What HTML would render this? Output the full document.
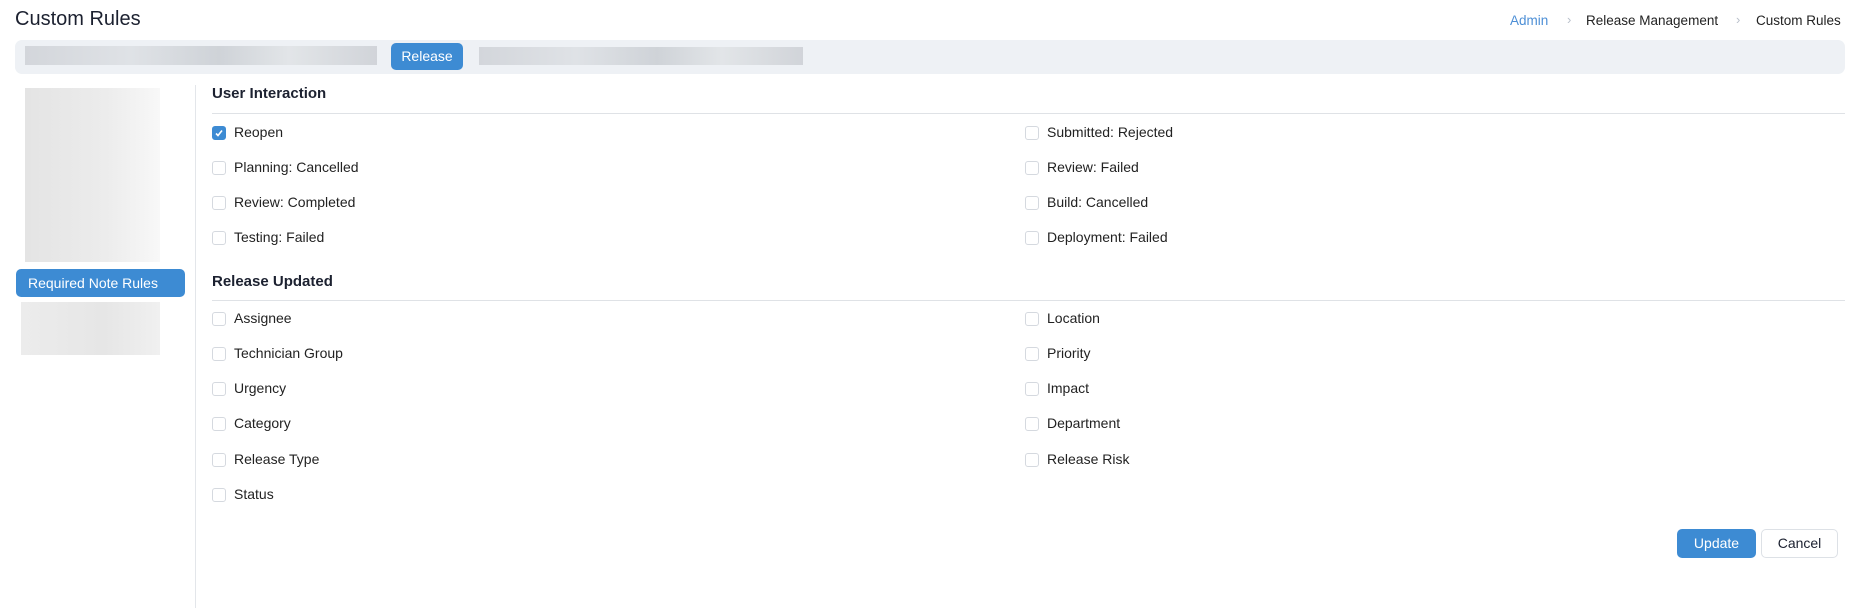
<!DOCTYPE html>
<html><head><meta charset="utf-8"><style>
*{box-sizing:border-box;margin:0;padding:0}
body{width:1853px;height:608px;background:#fff;font-family:"Liberation Sans",sans-serif;color:#1c2130;position:relative;overflow:hidden}
.a{position:absolute}
.title{left:15px;top:8px;font-size:20px;color:#1c2130}
.bc{top:13px;font-size:13.5px;color:#222}
.sep{top:12px;font-size:13px;color:#b8bfca}
.bar{left:15px;top:40px;width:1830px;height:34px;background:#eef1f5;border-radius:7px}
.blur{background:linear-gradient(90deg,#d3d6db,#dfe2e6 30%,#cfd3d8 55%,#e2e5e8 75%,#d1d4d9);}
.btn{background:#3d8bd3;color:#fff;border-radius:5px;font-size:14px;text-align:center}
.h{left:212px;font-size:15px;font-weight:bold;color:#1c2130}
.line{left:212px;width:1633px;height:1px;background:#dfe2e6}
.cb{width:14px;height:14px;border:1px solid #d5d9df;border-radius:3px;background:#fff}
.lb{font-size:14px;color:#222}
</style></head><body>
<div class="a title">Custom Rules</div>
<div class="a bc" style="left:1510px;color:#4d8fd6">Admin</div>
<div class="a sep" style="left:1567px">›</div>
<div class="a bc" style="left:1586px">Release Management</div>
<div class="a sep" style="left:1736px">›</div>
<div class="a bc" style="left:1756px">Custom Rules</div>
<div class="a bar"></div>
<div class="a blur" style="left:25px;top:46px;width:352px;height:19px"></div>
<div class="a btn" style="left:391px;top:43px;width:72px;height:27px;line-height:27px">Release</div>
<div class="a blur" style="left:479px;top:47px;width:324px;height:18px"></div>
<div class="a" style="left:25px;top:88px;width:135px;height:174px;background:linear-gradient(90deg,#e4e4e4,#ececec 60%,#f8f8f8)"></div>
<div class="a btn" style="left:16px;top:269px;width:169px;height:28px;line-height:28px;text-align:left;padding-left:12px;font-size:14px">Required Note Rules</div>
<div class="a" style="left:21px;top:302px;width:139px;height:53px;background:linear-gradient(90deg,#ececec,#e6e6e6 60%,#f0f0f0)"></div>
<div class="a" style="left:195px;top:85px;width:1px;height:523px;background:#e3e6ea"></div>
<div class="a h" style="top:85px">User Interaction</div>
<div class="a line" style="top:113px"></div>
<div class="a h" style="top:273px">Release Updated</div>
<div class="a line" style="top:300px"></div>
<div id="c"></div>
<div class="a btn" style="left:1677px;top:529px;width:79px;height:29px;line-height:29px">Update</div>
<div class="a" style="left:1761px;top:529px;width:77px;height:29px;line-height:27px;border:1px solid #dde1e6;border-radius:5px;text-align:center;font-size:14px">Cancel</div>
<script>
var rows=[[133,"Reopen","Submitted: Rejected",1],[168,"Planning: Cancelled","Review: Failed"],[203,"Review: Completed","Build: Cancelled"],[238,"Testing: Failed","Deployment: Failed"],
[319,"Assignee","Location"],[354,"Technician Group","Priority"],[389,"Urgency","Impact"],[424,"Category","Department"],[460,"Release Type","Release Risk"],[495,"Status",null]];
var h="";rows.forEach(function(r){[[212,r[1],r[3]],[1025,r[2]]].forEach(function(c,i){if(!c[1])return;
if(c[2])h+='<div class="a cb" style="left:'+c[0]+'px;top:'+(r[0]-7)+'px;background:#3d8bd3;border-color:#3d8bd3"><svg width="12" height="12" viewBox="0 0 12 12" style="position:absolute;left:0;top:0"><path d="M3 6.5l2 2 4-5" stroke="#fff" stroke-width="1.6" fill="none"/></svg></div>';
else h+='<div class="a cb" style="left:'+c[0]+'px;top:'+(r[0]-7)+'px"></div>';
h+='<div class="a lb" style="left:'+(c[0]+22)+'px;top:'+(r[0]-9)+'px">'+c[1]+'</div>';});});
document.getElementById("c").innerHTML=h;
</script>
</body></html>
